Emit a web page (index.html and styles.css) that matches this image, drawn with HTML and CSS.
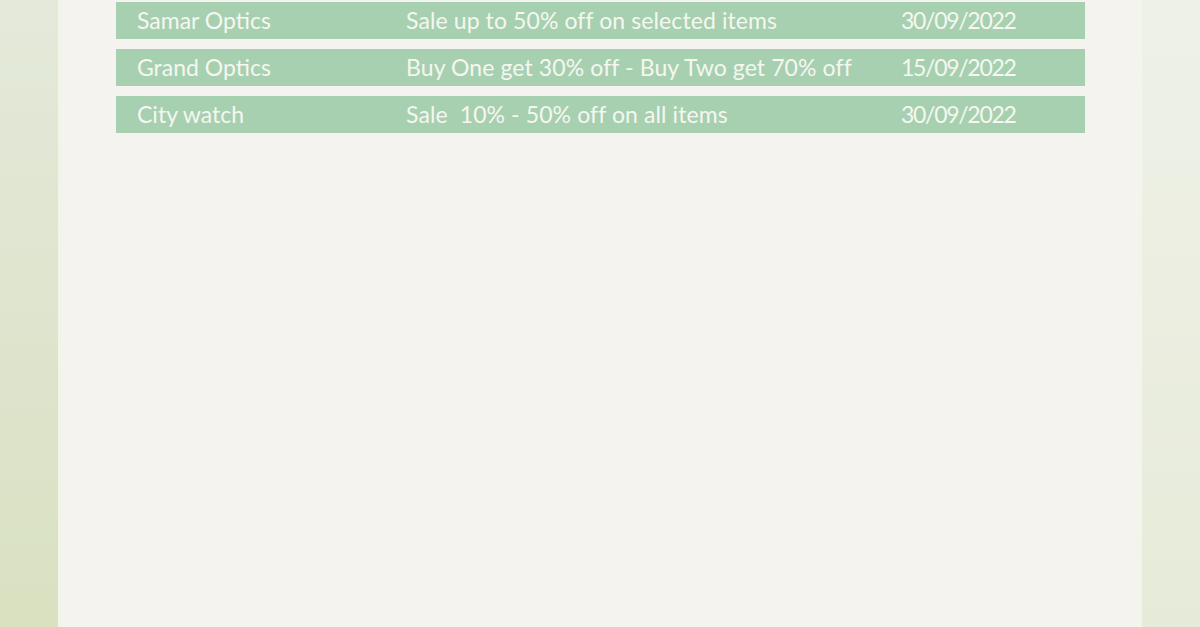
FILE: index.html
```html
<!DOCTYPE html>
<html>
<head>
<meta charset="utf-8">
<link rel="stylesheet" href="styles.css">
</head>
<body>
<div class="page">
  <div class="side side-left"></div>
  <main class="panel">
    <div class="offers">
      <div class="offer">
        <span class="shop">Samar Optics</span>
        <span class="deal">Sale up to 50% off on selected items</span>
        <span class="date">30/09/2022</span>
      </div>
      <div class="offer">
        <span class="shop">Grand Optics</span>
        <span class="deal">Buy One get 30% off - Buy Two get 70% off</span>
        <span class="date">15/09/2022</span>
      </div>
      <div class="offer">
        <span class="shop">City watch</span>
        <span class="deal">Sale&nbsp; 10% - 50% off on all items</span>
        <span class="date">30/09/2022</span>
      </div>
    </div>
  </main>
  <div class="side side-right"></div>
</div>
</body>
</html>
```
FILE: styles.css
```css
html, body {
  margin: 0;
  padding: 0;
  height: 100%;
}
body {
  font-family: "Lato", "Open Sans", sans-serif;
  background: #f4f3ef;
}
.page {
  display: flex;
  height: 627px;
  overflow: hidden;
}
.side {
  width: 58px;
  flex: none;
}
.side-left {
  background: linear-gradient(180deg, #e4e9da 0%, #dfe5cf 45%, #d9e1c1 100%);
}
.side-right {
  background: linear-gradient(180deg, #eef1e7 0%, #ebeee0 50%, #e6ebd9 100%);
}
.panel {
  flex: 1;
  background: #f4f3ef;
  padding: 2px 57px 0 58px;
  box-shadow: inset 4px 0 0 #f1f5e8, inset -9px 0 0 #f3f4ec;
}
.offers {
  display: flex;
  flex-direction: column;
  gap: 10px;
}
.offer {
  display: grid;
  grid-template-columns: 269px 495px 1fr;
  align-items: center;
  height: 37px;
  padding-left: 21px;
  background: #a7d0b0;
  color: #f5f7f0;
  font-size: 23px;
  line-height: 1;
}
.offer span {
  white-space: nowrap;
}
.offer .deal {
  letter-spacing: 0.1px;
}
.offer .date {
  letter-spacing: -1.3px;
}
```
